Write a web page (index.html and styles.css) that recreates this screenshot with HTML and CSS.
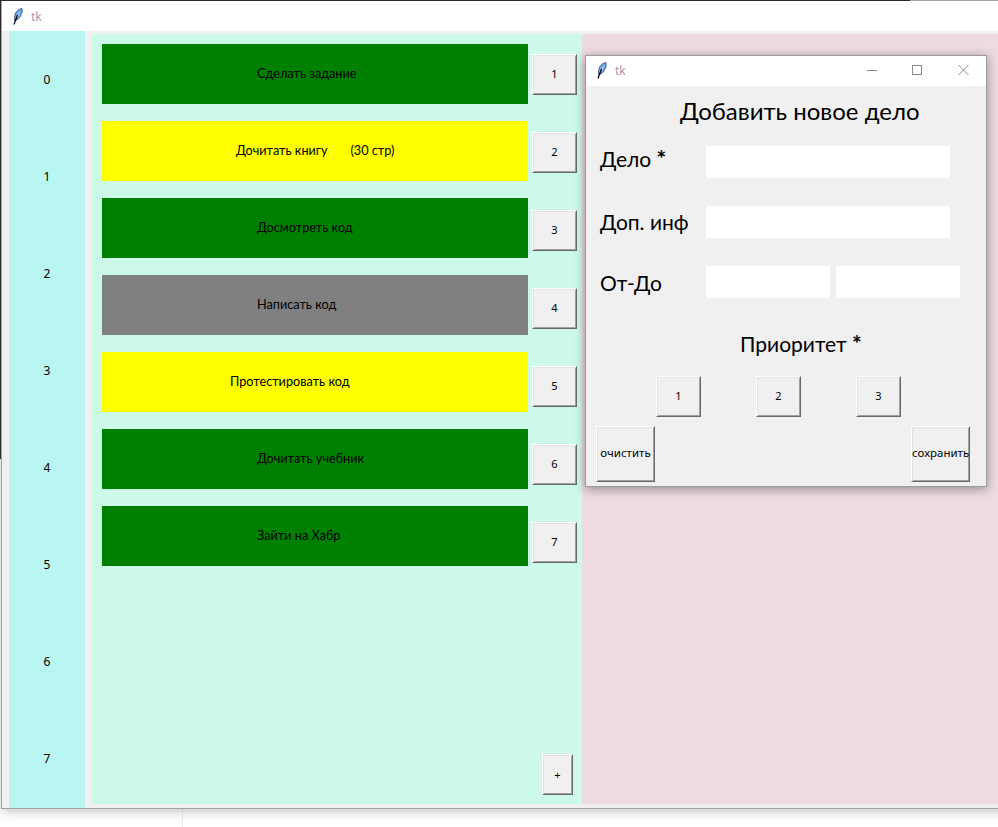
FILE: index.html
```html
<!DOCTYPE html>
<html lang="ru">
<head>
<meta charset="utf-8">
<title>tk</title>
<link rel="stylesheet" href="styles.css">
</head>
<body>
<div class="desktop">
  <div class="backdrop-line"></div>
  <div class="win win-main">
    <div class="titlebar">
      <svg class="feather" viewBox="0 0 10 17"><path d="M9 0.500C5 1 1.800 4.500 1.500 9.500L1.500 12.500C4.500 12.500 6.800 10 8 7C9.200 4.500 9.500 2.500 9 0.500Z" fill="#6aa5ea" stroke="#2a3a58" stroke-width="0.700"/><path d="M7 3.500L4 8M6.500 7L3 9" stroke="#dfeeff" stroke-width="0.700" fill="none"/><path d="M4.500 7L1 16.500" stroke="#000" stroke-width="1.200" fill="none"/></svg>
      <span class="tk">tk</span>
    </div>
    <div class="main-body">
      <div class="numbers">
        <span>0</span><span>1</span><span>2</span><span>3</span><span>4</span><span>5</span><span>6</span><span>7</span>
      </div>
      <div class="tasks">
        <div class="rows">
          <div class="row green"><span>Сделать задание</span></div>
          <div class="row yellow wide"><span>Дочитать книгу &nbsp; &nbsp; &nbsp; (30 стр)</span></div>
          <div class="row green"><span>Досмотреть код</span></div>
          <div class="row gray"><span>Написать код</span></div>
          <div class="row yellow widest"><span>Протестировать код</span></div>
          <div class="row green"><span>Дочитать учебник</span></div>
          <div class="row green"><span>Зайти на Хабр</span></div>
        </div>
        <div class="side">
          <button class="btn side-btn">1</button>
          <button class="btn side-btn">2</button>
          <button class="btn side-btn">3</button>
          <button class="btn side-btn">4</button>
          <button class="btn side-btn">5</button>
          <button class="btn side-btn">6</button>
          <button class="btn side-btn">7</button>
          <button class="btn plus">+</button>
        </div>
      </div>
      <div class="notes"></div>
    </div>
  </div>
  <div class="edge-top"></div>
  <div class="edge-left"></div>

  <div class="win win-dialog">
    <div class="titlebar dialog-bar">
      <svg class="feather" viewBox="0 0 10 17"><path d="M9 0.500C5 1 1.800 4.500 1.500 9.500L1.500 12.500C4.500 12.500 6.800 10 8 7C9.200 4.500 9.500 2.500 9 0.500Z" fill="#6aa5ea" stroke="#2a3a58" stroke-width="0.700"/><path d="M7 3.500L4 8M6.500 7L3 9" stroke="#dfeeff" stroke-width="0.700" fill="none"/><path d="M4.500 7L1 16.500" stroke="#000" stroke-width="1.200" fill="none"/></svg>
      <span class="tk">tk</span>
      <div class="controls">
        <svg viewBox="0 0 46 12"><path d="M19 6.500H29" stroke="#8c8c8c" fill="none"/></svg>
        <svg viewBox="0 0 46 12"><rect x="18.500" y="1.500" width="9" height="9" stroke="#8c8c8c" fill="none"/></svg>
        <svg viewBox="0 0 46 12"><path d="M18.500 1L28.500 11M28.500 1L18.500 11" stroke="#8c8c8c" fill="none"/></svg>
      </div>
    </div>
    <div class="dialog-body">
      <h1 class="heading">Добавить новое дело</h1>
      <div class="form">
        <label class="label label-first">Дело <span class="star">*</span></label>
        <div class="inputs"><input class="input input-long" type="text"></div>
        <label class="label label-second">Доп. инф</label>
        <div class="inputs"><input class="input input-long" type="text"></div>
        <label class="label label-third">От-До</label>
        <div class="inputs"><input class="input input-short" type="text"><input class="input input-short" type="text"></div>
      </div>
      <h2 class="priority">Приоритет <span class="star">*</span></h2>
      <div class="priority-row">
        <button class="btn side-btn">1</button>
        <button class="btn side-btn">2</button>
        <button class="btn side-btn">3</button>
      </div>
      <div class="actions">
        <button class="btn action">очистить</button>
        <button class="btn action">сохранить</button>
      </div>
    </div>
  </div>
</div>
</body>
</html>
```

FILE: styles.css
```css
html, body {
  margin: 0;
  padding: 0;
  background: #ffffff;
}
.desktop {
  position: relative;
  width: 998px;
  height: 827px;
  overflow: hidden;
  font-family: "Lato", "Open Sans", sans-serif;
  color: #000;
}
.backdrop-line {
  position: absolute;
  left: 182px;
  top: 808px;
  width: 1px;
  height: 19px;
  background: #efefef;
}
.win {
  position: absolute;
  box-sizing: border-box;
  background: #f0f0f0;
}
.win-main {
  left: 1px;
  top: 0;
  width: 1010px;
  height: 809px;
  border: 1px solid #a3a3a3;
  box-shadow: 0 3px 10px rgba(0, 0, 0, 0.22);
}
.edge-top {
  position: absolute;
  left: 0;
  top: 0;
  width: 910px;
  height: 1px;
  background: #2b2b2b;
}
.edge-left {
  position: absolute;
  left: 0;
  top: 0;
  width: 1px;
  height: 459px;
  background: #2b2b2b;
}
.titlebar {
  display: flex;
  align-items: center;
  box-sizing: border-box;
  height: 30px;
  padding-left: 11px;
  background: #ffffff;
}
.feather {
  width: 10px;
  height: 17px;
  flex: none;
}
.tk {
  margin-left: 8px;
  font-family: "Noto Sans", sans-serif;
  font-size: 12px;
  color: #a79ca6;
}
.main-body {
  display: flex;
  height: 777px;
  padding-left: 7px;
}
.numbers {
  display: grid;
  grid-template-rows: repeat(8, 97px);
  width: 76px;
  flex: none;
  background: #b9f6f2;
  font-family: "Noto Sans", sans-serif;
  font-size: 12px;
}
.numbers span {
  display: flex;
  align-items: center;
  justify-content: center;
}
.tasks {
  display: flex;
  box-sizing: border-box;
  width: 490px;
  height: 770px;
  flex: none;
  margin: 3px 0 0 7px;
  padding: 10px 5px 9px 10px;
  background: #cdf9e9;
}
.rows {
  display: flex;
  flex-direction: column;
  gap: 17px;
  width: 426px;
  margin-right: 4px;
  flex: none;
}
.row {
  display: flex;
  align-items: center;
  height: 60px;
  padding: 0 0 2px 155px;
  box-sizing: border-box;
  font-size: 12.7px;
}
.row.wide { padding-left: 134px; }
.row.widest { padding-left: 128px; }
.green { background: #008000; }
.yellow { background: #ffff00; }
.gray { background: #808080; }
.side {
  display: flex;
  flex-direction: column;
  align-items: flex-start;
  gap: 37px;
  padding-top: 10px;
  width: 45px;
}
.btn {
  box-sizing: border-box;
  margin: 0;
  padding: 0;
  background: #f0f0f0;
  border: 1px solid;
  border-color: #ffffff #696969 #696969 #ffffff;
  box-shadow: inset 1px 1px 0 #e3e3e3, inset -1px -1px 0 #a0a0a0;
  border-radius: 0;
  color: #000;
  font-family: "Noto Sans", sans-serif;
  font-size: 11px;
  cursor: default;
}
.side-btn {
  width: 45px;
  height: 41px;
  padding-bottom: 2px;
  flex: none;
}
.plus {
  width: 31px;
  height: 41px;
  margin: auto 0 0 10px;
}
.notes {
  width: 420px;
  height: 770px;
  margin-top: 3px;
  background: #ecdbe1;
}
.win-dialog {
  left: 585px;
  top: 55px;
  width: 402px;
  height: 432px;
  border: 1px solid #9c9c9c;
  box-shadow: 0 2px 10px rgba(0, 0, 0, 0.38);
}
.dialog-bar {
  padding: 0 0 2px 11px;
}
.controls {
  display: flex;
  margin-left: auto;
}
.controls svg {
  width: 46px;
  height: 12px;
}
.dialog-body {
  display: flex;
  flex-direction: column;
  padding: 0 16px 0 10px;
}
.heading {
  margin: 9px 0 0 84px;
  height: 32px;
  font-size: 24px;
  line-height: 32px;
  font-weight: 400;
  white-space: nowrap;
}
.form {
  display: grid;
  grid-template-columns: 106px 1fr;
  row-gap: 28px;
  margin: 19px 0 0 4px;
}
.label {
  font-size: 21px;
  line-height: 28px;
  white-space: nowrap;
}
.label-first { margin-top: -1px; }
.label-second { margin-top: 2px; }
.label-third { margin-top: 3px; }
.star {
  font-weight: 700;
  font-size: 23px;
  line-height: 0;
}
.inputs {
  display: flex;
  gap: 6px;
}
.input {
  box-sizing: border-box;
  height: 32px;
  border: 0;
  padding: 0;
  background: #ffffff;
}
.input-long { width: 244px; }
.input-short { width: 124px; }
.priority {
  margin: 32px 0 0 144px;
  height: 28px;
  font-size: 21px;
  line-height: 28px;
  font-weight: 400;
}
.priority-row {
  display: flex;
  gap: 55px;
  margin: 18px 0 0 60px;
}
.actions {
  display: flex;
  justify-content: space-between;
  margin-top: 9px;
}
.action {
  width: 59px;
  height: 56px;
  padding-bottom: 4px;
  font-size: 11.500px;
  white-space: nowrap;
}
```
